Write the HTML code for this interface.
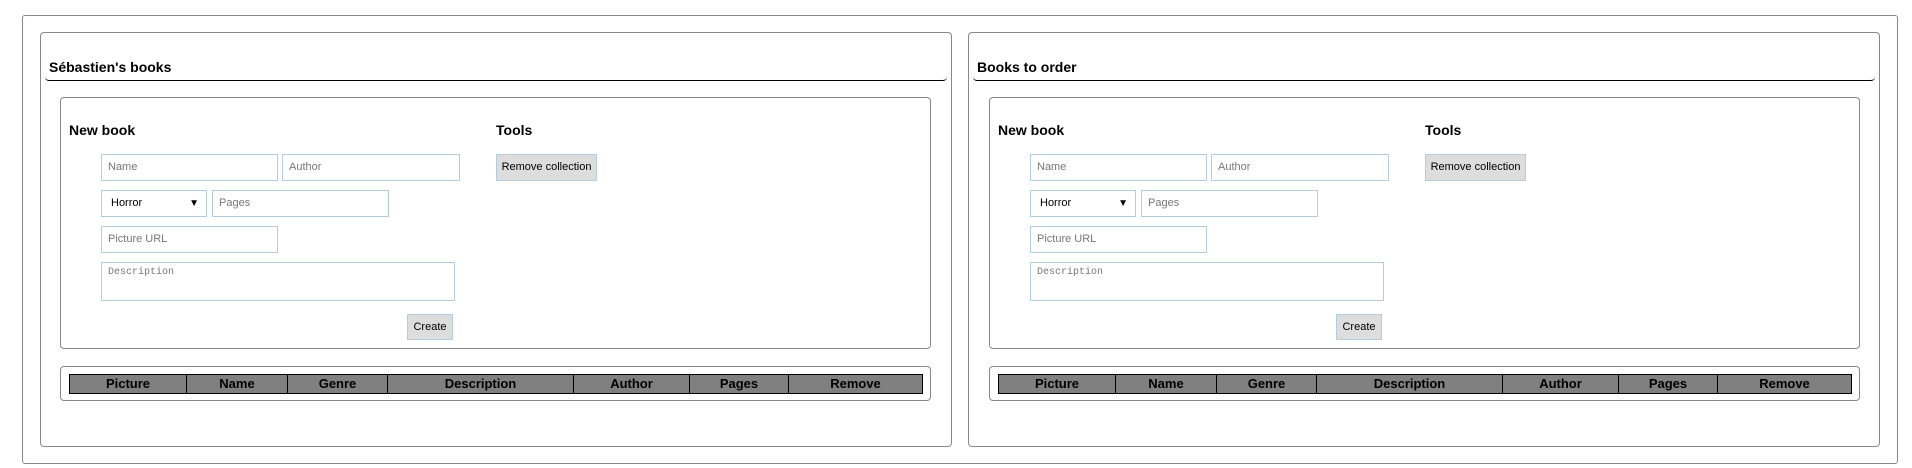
<!DOCTYPE html>
<html><head><meta charset="utf-8"><style>
*{box-sizing:border-box;margin:0;padding:0}
body{width:1912px;height:468px;background:#fff;position:relative;font-family:"Liberation Sans",sans-serif;overflow:hidden}
.a{position:absolute;white-space:nowrap}
.outer{left:22px;top:15px;width:1876px;height:449px;border:1px solid #888;border-radius:3px}
.panel{top:32px;width:912px;height:415px;border:1px solid #888;border-radius:4px}
.title{left:8px;top:26px;font-weight:bold;font-size:14px;color:#000}
.uline{left:4px;top:39px;width:902px;height:9px;border-bottom:1px solid #000;border-radius:0 0 4px 4px}
.box{left:20px;top:65px;width:871px;height:252px;border:1px solid #888;border-radius:4px}
.h{font-weight:bold;font-size:14px;color:#000}
.in{border:1px solid #b3cde0;height:27px;font-size:11px;color:#777;padding:0 0 0 6px;line-height:25px;background:#fff}
.btn{background:#ddd;border:1px solid #b3cde0;font-size:11px;color:#000;text-align:center;line-height:25px}
.tbox{left:20px;top:334px;width:871px;height:35px;border:1px solid #888;border-radius:4px}
table{position:absolute;width:854px;height:20px;border-collapse:collapse;background:#808080}
td{border:1.5px solid #000;font-weight:bold;font-size:13px;text-align:center;color:#000;padding:0;line-height:16px}
</style></head><body>
<div class="a outer"></div>

<div class="a panel" style="left:40px">
 <div class="a title">Sébastien's books</div>
 <div class="a uline"></div>
</div>
<div class="a panel" style="left:968px">
 <div class="a title">Books to order</div>
 <div class="a uline"></div>
</div>

<div class="a" style="left:0;top:0">
 <div class="a box" style="left:60px;top:97px"></div>
 <div class="a h" style="left:69px;top:122px">New book</div>
 <div class="a h" style="left:496px;top:122px">Tools</div>
 <div class="a in" style="left:101px;top:154px;width:177px">Name</div>
 <div class="a in" style="left:282px;top:154px;width:178px">Author</div>
 <div class="a in" style="left:101px;top:190px;width:106px;color:#000;padding-left:9px">Horror<span style="position:absolute;right:7px;top:0;font-size:10px">▼</span></div>
 <div class="a in" style="left:212px;top:190px;width:177px">Pages</div>
 <div class="a in" style="left:101px;top:226px;width:177px">Picture URL</div>
 <div class="a in" style="left:101px;top:262px;width:354px;height:39px;font-family:'Liberation Mono',monospace;font-size:10px;line-height:20px">Description</div>
 <div class="a btn" style="left:407px;top:314px;width:46px;height:26px">Create</div>
 <div class="a btn" style="left:496px;top:154px;width:101px;height:27px">Remove collection</div>
 <div class="a tbox" style="left:60px;top:366px"></div>
 <table style="left:69px;top:374px"><tr><td style="width:117px">Picture</td><td style="width:101px">Name</td><td style="width:100px">Genre</td><td style="width:186px">Description</td><td style="width:116px">Author</td><td style="width:99px">Pages</td><td>Remove</td></tr></table>
</div>

<div class="a" style="left:929px;top:0">
 <div class="a box" style="left:60px;top:97px"></div>
 <div class="a h" style="left:69px;top:122px">New book</div>
 <div class="a h" style="left:496px;top:122px">Tools</div>
 <div class="a in" style="left:101px;top:154px;width:177px">Name</div>
 <div class="a in" style="left:282px;top:154px;width:178px">Author</div>
 <div class="a in" style="left:101px;top:190px;width:106px;color:#000;padding-left:9px">Horror<span style="position:absolute;right:7px;top:0;font-size:10px">▼</span></div>
 <div class="a in" style="left:212px;top:190px;width:177px">Pages</div>
 <div class="a in" style="left:101px;top:226px;width:177px">Picture URL</div>
 <div class="a in" style="left:101px;top:262px;width:354px;height:39px;font-family:'Liberation Mono',monospace;font-size:10px;line-height:20px">Description</div>
 <div class="a btn" style="left:407px;top:314px;width:46px;height:26px">Create</div>
 <div class="a btn" style="left:496px;top:154px;width:101px;height:27px">Remove collection</div>
 <div class="a tbox" style="left:60px;top:366px"></div>
 <table style="left:69px;top:374px"><tr><td style="width:117px">Picture</td><td style="width:101px">Name</td><td style="width:100px">Genre</td><td style="width:186px">Description</td><td style="width:116px">Author</td><td style="width:99px">Pages</td><td>Remove</td></tr></table>
</div>
</body></html>
